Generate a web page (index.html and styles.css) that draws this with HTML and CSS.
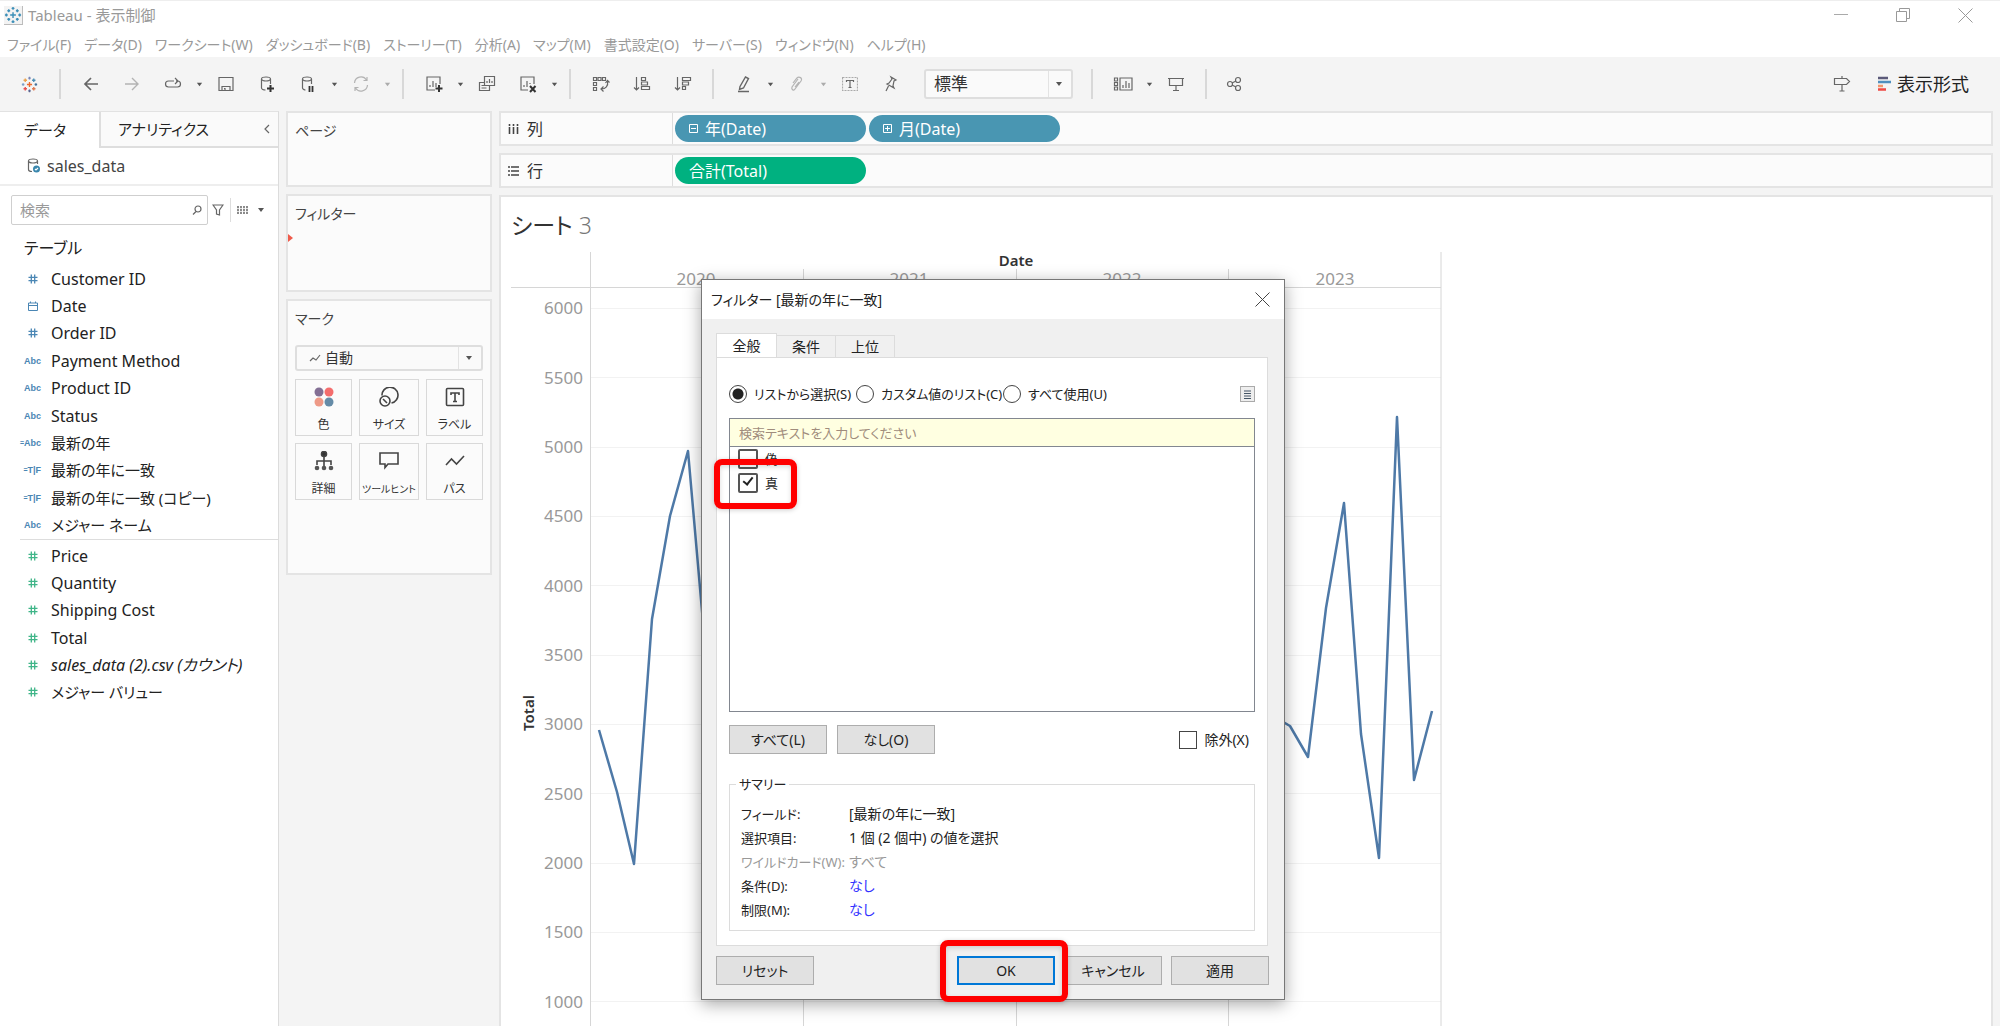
FILE: index.html
```html
<!DOCTYPE html>
<html lang="ja">
<head>
<meta charset="utf-8">
<title>Tableau - 表示制御</title>
<link rel="stylesheet" href="styles.css">
</head>
<body>
<svg class="defs" width="0" height="0" aria-hidden="true">
  <symbol id="caret" viewBox="0 0 8 8"><path d="M1 2h6L4 6z" fill="currentColor"/></symbol>
  <symbol id="hash" viewBox="0 0 10 10"><path d="M3.300 .5v9M6.700 .5v9M.5 3.300h9M.5 6.700h9" fill="none" stroke="currentColor" stroke-width="1.300"/></symbol>
  <symbol id="spark" viewBox="0 0 20 20"><g stroke-width="1.600" fill="none">
    <path d="M10 7v6M7 10h6" stroke="#eb6a2d"/>
    <path d="M10 1v3M8.500 2.500h3" stroke="#7b86b5"/><path d="M10 16v3M8.500 17.500h3" stroke="#5a6591"/>
    <path d="M2.500 8.500v3M1 10h3" stroke="#7b9fc9"/><path d="M17.500 8.500v3M16 10h3" stroke="#46719b"/>
    <path d="M5 3v4M3 5h4" stroke="#eba14b"/><path d="M15 3v4M13 5h4" stroke="#4e8fb5"/>
    <path d="M5 13v4M3 15h4" stroke="#e8504f"/><path d="M15 13v4M13 15h4" stroke="#e07a52"/></g></symbol>
</svg>
<div class="app">
  <header class="titlebar">
    <svg class="appicon" width="19" height="19" viewBox="0 0 20 20"><rect width="20" height="20" fill="#f3f3f3"/><path d="M20 0v20H0" fill="none" stroke="#bbb" stroke-width="2"/><g stroke="#3c8fb8" stroke-width="1.500"><path d="M9.500 6.500v6M6.500 9.500h6M9.500 1v3M8 2.500h3M9.500 15v3M8 16.500h3M2.500 8v3M1 9.500h3M16.500 8v3M15 9.500h3M5 3.500v3M3.500 5h3M14 3.500v3M12.500 5h3M5 12.500v3M3.500 14h3M14 12.500v3M12.500 14h3"/></g></svg>
    <h1 class="apptitle">Tableau - 表示制御</h1>
    <div class="winbtns">
      <button aria-label="最小化"><svg width="14" height="14"><path d="M0 6.500h14" stroke="#aaa"/></svg></button>
      <button aria-label="元に戻す"><svg width="15" height="15" fill="none" stroke="#999"><path d="M.5 3.500h10v10H.5zM3.500 3.500v-3h10v10h-3"/></svg></button>
      <button aria-label="閉じる"><svg width="15" height="15"><path d="M.5 .5l14 14M14.500 .5l-14 14" stroke="#999"/></svg></button>
    </div>
  </header>
  <nav class="menu">
    <a href="#">ファイル(F)</a><a href="#">データ(D)</a><a href="#">ワークシート(W)</a><a href="#">ダッシュボード(B)</a><a href="#">ストーリー(T)</a><a href="#">分析(A)</a><a href="#">マップ(M)</a><a href="#">書式設定(O)</a><a href="#">サーバー(S)</a><a href="#">ウィンドウ(N)</a><a href="#">ヘルプ(H)</a>
  </nav>
  <div class="toolbar">
    <button class="tb" aria-label="スタートページ"><svg width="17" height="17"><use href="#spark"/></svg></button>
    <i class="sep"></i>
    <button class="tb" aria-label="元に戻す"><svg width="16" height="16" class="ic"><path d="M15 8H2M8 2L2 8l6 6" stroke-width="1.700"/></svg></button>
    <button class="tb off" aria-label="やり直す"><svg width="16" height="16" class="ic"><path d="M1 8h13M8 2l6 6-6 6" stroke-width="1.400"/></svg></button>
    <button class="tb" aria-label="再生"><svg width="18" height="14" class="ic"><path d="M10 4H4.500a3 3 0 0 0 0 6h9a3 3 0 0 0 0-6H12M11 1l3 3-3 3"/></svg></button>
    <button class="cr" aria-label="再生メニュー"><svg width="7" height="7"><use href="#caret"/></svg></button>
    <button class="tb" aria-label="保存"><svg width="16" height="16" class="ic"><path d="M1 1.500h14v13H1zM4 14.500v-4h8v4M6 12.500h1v2"/></svg></button>
    <button class="tb" aria-label="データソース"><svg width="18" height="18" class="ic"><ellipse cx="8" cy="4" rx="4.500" ry="2"/><path d="M3.500 4v9c0 1 2 2 4 2M12.500 4v5"/><path d="M12.500 10v7M9 13.500h7" stroke="#333" stroke-width="2"/></svg></button>
    <button class="tb" aria-label="自動更新の一時停止"><svg width="18" height="18" class="ic"><ellipse cx="8" cy="4" rx="4.500" ry="2"/><path d="M3.500 4v9c0 1 2 2 3 2M12.500 4v5"/><path d="M10.500 11v6M13.500 11v6" stroke="#333" stroke-width="1.800"/></svg></button>
    <button class="cr" aria-label="自動更新メニュー"><svg width="7" height="7"><use href="#caret"/></svg></button>
    <button class="tb off" aria-label="更新"><svg width="18" height="18" class="ic"><path d="M2.500 8a6.500 6.500 0 0 1 12-3M15.500 10a6.500 6.500 0 0 1-12 3M15 2v3.500h-3.500M3 16v-3.500h3.500"/></svg></button>
    <button class="cr off" aria-label="更新メニュー"><svg width="7" height="7"><use href="#caret"/></svg></button>
    <i class="sep"></i>
    <button class="tb" aria-label="新しいワークシート"><svg width="18" height="18" class="ic"><path d="M10 15H2V2h13v7M5 12v-2M8 12V6M11 12V8"/><path d="M14 10v7M10.500 13.500h7" stroke="#333" stroke-width="2"/></svg></button>
    <button class="cr" aria-label="新規メニュー"><svg width="7" height="7"><use href="#caret"/></svg></button>
    <button class="tb" aria-label="複製"><svg width="18" height="18" class="ic"><path d="M6.500 1.500h10v9h-10zM6.500 7.500h-5v8h10v-5M9 8V6M11.500 8V4M14 8V6M3.500 10.500h3M3.500 13h5"/></svg></button>
    <button class="tb" aria-label="クリア"><svg width="18" height="18" class="ic"><path d="M9 15H2V2h13v7M5 12v-2M8 12V6M11 9V8"/><path d="M11 11l5.500 6M16.500 11L11 17" stroke="#333" stroke-width="2"/></svg></button>
    <button class="cr" aria-label="クリアメニュー"><svg width="7" height="7"><use href="#caret"/></svg></button>
    <i class="sep"></i>
    <button class="tb" aria-label="入れ替え"><svg width="18" height="18" class="ic"><path d="M1.500 2.500h3v3h-3zM6 2.500h3v3H6zM10.500 2.500h3v3h-3zM1.500 7.500h3v3h-3zM1.500 12.500h3v3h-3zM15.500 6c1 5-2 8-6 8M13.500 8l2-2.500 2 2M11.500 11.500L9 14l2.500 2.500"/></svg></button>
    <button class="tb" aria-label="昇順"><svg width="18" height="18" class="ic"><path d="M3.500 2v13M1 12.500L3.500 15 6 12.500M8.500 2.500h4v3h-4zM8.500 7h6v3h-6zM8.500 11.500h8v3h-8z"/></svg></button>
    <button class="tb" aria-label="降順"><svg width="18" height="18" class="ic"><path d="M3.500 2v13M1 12.500L3.500 15 6 12.500M8.500 2.500h8v3h-8zM8.500 7h6v3h-6zM8.500 11.500h3v3h-3z"/></svg></button>
    <i class="sep"></i>
    <button class="tb" aria-label="ハイライト"><svg width="16" height="18" class="ic"><path d="M4 11.500L9.500 2l3 1.500-5 9.500-4 1.500zM2 16.500h11" stroke-width="1.400"/></svg></button>
    <button class="cr" aria-label="ハイライトメニュー"><svg width="7" height="7"><use href="#caret"/></svg></button>
    <button class="tb off" aria-label="グループ"><svg width="16" height="18" class="ic"><path d="M4 8l4-5c2-2 6 0 4 3l-6 8c-1 2-4 1-3-2l6-8M6 12l4-5"/></svg></button>
    <button class="cr off" aria-label="グループメニュー"><svg width="7" height="7"><use href="#caret"/></svg></button>
    <button class="tb" aria-label="マークラベル"><svg width="16" height="16" class="ic"><path d="M.5 1.500h15v13H.5z" stroke="#aaa" stroke-dasharray="2 1"/><path d="M4.500 6V4.500h7V6M8 4.500v7M6.500 11.500h3"/></svg></button>
    <button class="tb" aria-label="固定"><svg width="16" height="18" class="ic"><path d="M8 2l5 3-2 1-1 5 1 2-7-4 2-1 3-4zM5.500 11L3 16"/></svg></button>
    <label class="combo fit"><select aria-label="表示サイズ"><option>標準</option></select><svg width="8" height="8"><use href="#caret"/></svg></label>
    <i class="sep"></i>
    <button class="tb" aria-label="カードの表示"><svg width="20" height="16" class="ic"><path d="M1.500 2h3v3h-3zM1.500 6.500h3v3h-3zM1.500 11h3v3h-3zM7 2h12v12H7zM10 12V9M13 12V5M16 12V7" /></svg></button>
    <button class="cr" aria-label="カードメニュー"><svg width="7" height="7"><use href="#caret"/></svg></button>
    <button class="tb" aria-label="プレゼンテーション"><svg width="16" height="16" class="ic"><path d="M0 2.500h16M1.500 2.500v7h13v-7M8 9.500v5M5 14.500h6"/></svg></button>
    <i class="sep"></i>
    <button class="tb share" aria-label="共有"><svg width="16" height="16" class="ic"><circle cx="4" cy="8" r="2.500"/><circle cx="12" cy="4" r="2.500"/><circle cx="12" cy="12" r="2.500"/><path d="M6 7l4-2M6 9l4 2"/></svg></button>
    <div class="tbright">
      <button class="guide" aria-label="データガイド"><svg width="18" height="18" class="ic"><path d="M1.500 3.500h12l3 3-3 3h-12zM9 1v2.500M9 9.500V16M6.500 16h5"/></svg></button>
      <button class="showme"><svg width="13" height="16"><path d="M0 2h10" stroke="#5b5a79" stroke-width="2.500"/><path d="M0 6h13" stroke="#4f8fbe" stroke-width="2.500"/><path d="M0 10h5" stroke="#f2966b" stroke-width="2.500"/><path d="M0 13.500h8" stroke="#ef4a45" stroke-width="2.500"/></svg>表示形式</button>
    </div>
  </div>

  <main class="work">
    <aside class="data">
      <div class="dtabs"><button class="dtab on">データ</button><button class="dtab rest">アナリティクス<svg width="6" height="10" class="ic"><path d="M5 1L1 5l4 4"/></svg></button></div>
      <div class="source"><svg width="14" height="16" class="ic"><ellipse cx="6" cy="3" rx="4.500" ry="2"/><path d="M1.500 3v8.500c0 1 1.500 2 3.500 2M10.500 3v3"/><circle cx="9.500" cy="11" r="3.500" fill="#3a87ad" stroke="none"/><path d="M8 11l1 1 2-2" stroke="#fff"/></svg>sales_data</div>
      <div class="search">
        <label class="sbox"><input type="text" placeholder="検索" aria-label="検索"><svg width="10" height="10" class="ic"><circle cx="6" cy="4" r="3"/><path d="M4 6.500L1 9.500"/></svg></label>
        <button aria-label="フィルター"><svg width="12" height="12" class="ic"><path d="M1 1h10L7.500 6v5l-3-1V6z"/></svg></button>
        <i></i>
        <button class="view" aria-label="表示"><svg width="12" height="10"><path d="M1 1v8M4 1v8M7 1v8M10 1v8" stroke="#777" stroke-width="1.700" stroke-dasharray="2.200 .7"/></svg><svg width="8" height="8"><use href="#caret"/></svg></button>
      </div>
      <h2>テーブル</h2>
      <ul class="fields dims">
        <li><svg width="10" height="10"><use href="#hash"/></svg>Customer ID</li>
        <li><svg width="10" height="10" fill="none" stroke="currentColor"><path d="M.5 2h9v7.500h-9zM.5 4.500h9M2.500 .5V2M7.500 .5V2"/></svg>Date</li>
        <li><svg width="10" height="10"><use href="#hash"/></svg>Order ID</li>
        <li><b>Abc</b>Payment Method</li>
        <li><b>Abc</b>Product ID</li>
        <li><b>Abc</b>Status</li>
        <li class="jp"><b class="calc">Abc</b>最新の年</li>
        <li class="jp"><b class="calc">T|F</b>最新の年に一致</li>
        <li class="jp"><b class="calc">T|F</b>最新の年に一致 (コピー)</li>
        <li class="jp"><b>Abc</b>メジャー ネーム</li>
      </ul>
      <ul class="fields meas">
        <li><svg width="10" height="10"><use href="#hash"/></svg>Price</li>
        <li><svg width="10" height="10"><use href="#hash"/></svg>Quantity</li>
        <li><svg width="10" height="10"><use href="#hash"/></svg>Shipping Cost</li>
        <li><svg width="10" height="10"><use href="#hash"/></svg>Total</li>
        <li class="it"><svg width="10" height="10"><use href="#hash"/></svg>sales_data (2).csv (カウント)</li>
        <li class="jp"><svg width="10" height="10"><use href="#hash"/></svg>メジャー バリュー</li>
      </ul>
    </aside>

    <section class="cards">
      <div class="card pages"><h3>ページ</h3></div>
      <div class="card filters"><h3>フィルター</h3><svg class="flag" width="5" height="8"><path d="M0 0l5 4-5 4z" fill="#ef5b4b"/></svg></div>
      <div class="card marks">
        <h3>マーク</h3>
        <div class="combo mark"><svg class="lead ic" width="12" height="8"><path d="M1 7l3-3 3 2 4-5"/></svg><select aria-label="マークの種類"><option>自動</option></select><svg width="8" height="8"><use href="#caret"/></svg></div>
        <div class="cells">
          <button><svg width="20" height="20"><circle cx="5" cy="5" r="4.500" fill="#836f94"/><circle cx="15" cy="5" r="4.500" fill="#f46d6d"/><circle cx="5" cy="15" r="4.500" fill="#ee9a87"/><circle cx="15" cy="15" r="4.500" fill="#658ba7"/></svg>色</button>
          <button><svg width="20" height="20" class="ic dk"><path d="M3 8.500a8 8 0 1 1 9.500 7.500"/><circle cx="6" cy="14" r="5"/><path d="M4 12l4 4"/></svg>サイズ</button>
          <button><svg width="20" height="20" class="ic dk"><rect x="1.500" y="1.500" width="17" height="17" rx="1"/><path d="M6 8V6h8v2M10 6v9M8 14.500h4"/></svg>ラベル</button>
          <button><svg width="20" height="20" class="ic dk"><circle cx="10" cy="3" r="2.500" fill="#333"/><path d="M10 5v11M3 14v-4h14v4"/><g fill="#555" stroke="none"><circle cx="3" cy="17" r="2.300"/><circle cx="10" cy="17" r="2.300"/><circle cx="17" cy="17" r="2.300"/></g></svg>詳細</button>
          <button><svg width="20" height="20" class="ic dk"><path d="M1 2h18v11H9l-3 3.500V13H1z"/></svg><small>ツールヒント</small></button>
          <button><svg width="20" height="20" class="ic dk"><path d="M1 14l5.500-6 5 5L19 5"/></svg>パス</button>
        </div>
      </div>
    </section>

    <section class="sheet">
      <div class="shelf"><div class="sname"><svg width="11" height="12"><path d="M1.500 1v2M5.500 1v2M9.500 1v2M1.500 4v7M5.500 4v7M9.500 4v7" stroke="#444" stroke-width="1.600"/></svg>列</div>
        <div class="pills"><button class="pill"><svg width="9" height="9" fill="none" stroke="#fff"><path d="M.5 .5h8v8h-8zM2 4.500h5"/></svg>年(Date)</button><button class="pill"><svg width="9" height="9" fill="none" stroke="#fff"><path d="M.5 .5h8v8h-8zM2 4.500h5M4.500 2v5"/></svg>月(Date)</button></div></div>
      <div class="shelf"><div class="sname"><svg width="11" height="12"><path d="M0 2h2M0 6h2M0 10h2M3 2h8M3 6h8M3 10h8" stroke="#444" stroke-width="1.600"/></svg>行</div>
        <div class="pills"><button class="pill green">合計(Total)</button></div></div>
      <div class="view-area">
        <h2>シート <span>3</span></h2>
        <svg class="chart" width="931" height="776" viewBox="511 250 931 776">
          <g class="grid"><path d="M590 308.500h851M590 377.500h851M590 447.500h851M590 516.500h851M590 585.500h851M590 655.500h851M590 724.500h851M590 793.500h851M590 863.500h851M590 932.500h851M590 1001.500h851"/></g>
          <g class="axis"><path d="M511 287.500h930M590.500 252v774M803.500 269v757M1016.500 269v757M1228.500 269v757M1441 252v774"/></g>
          <g class="lab" text-anchor="middle"><text x="696" y="285">2020</text><text x="909" y="285">2021</text><text x="1122" y="285">2022</text><text x="1335" y="285">2023</text></g>
          <g class="lab" text-anchor="end"><text x="583" y="314">6000</text><text x="583" y="384">5500</text><text x="583" y="453">5000</text><text x="583" y="522">4500</text><text x="583" y="592">4000</text><text x="583" y="661">3500</text><text x="583" y="730">3000</text><text x="583" y="800">2500</text><text x="583" y="869">2000</text><text x="583" y="938">1500</text><text x="583" y="1008">1000</text></g>
          <text class="ttl" x="1016" y="266" text-anchor="middle">Date</text>
          <text class="ttl" text-anchor="middle" transform="translate(534 713) rotate(-90)">Total</text>
          <path class="line" d="M599 730L617 792 634 864 652 619 670 516 688 451 705 645"/>
          <path class="line" d="M1273 716L1290 726 1308 757 1326 608 1344 503 1361 734 1379 858 1397 417 1414 780 1432 711"/>
        </svg>
      </div>
    </section>
  </main>
</div>

<div class="dialog" role="dialog" aria-labelledby="dt">
  <div class="dhead"><h2 id="dt">フィルター [最新の年に一致]</h2><button aria-label="閉じる"><svg width="15" height="15"><path d="M.5 .5l14 14M14.500 .5l-14 14" stroke="#444"/></svg></button></div>
  <div class="dbody">
    <div class="tabs"><button class="on">全般</button><button>条件</button><button>上位</button></div>
    <div class="panel">
      <div class="radios">
        <input type="radio" name="mode" id="m1" checked><label for="m1">リストから選択(S)</label>
        <input type="radio" name="mode" id="m2"><label for="m2">カスタム値のリスト(C)</label>
        <input type="radio" name="mode" id="m3"><label for="m3">すべて使用(U)</label>
        <button class="opts" aria-label="オプション"><svg width="7" height="9"><path d="M0 1h7M0 3.500h7M0 6h7M0 8.500h7" stroke="#456" /></svg></button>
      </div>
      <div class="listbox">
        <input class="find" type="text" placeholder="検索テキストを入力してください" aria-label="検索テキスト">
        <div class="opt"><input type="checkbox" id="c1"><label for="c1">偽</label></div>
        <div class="opt"><input type="checkbox" id="c2" checked><label for="c2">真</label></div>
      </div>
      <div class="listbtns"><button class="btn">すべて(L)</button><button class="btn">なし(O)</button>
        <div class="excl"><input type="checkbox" id="ex"><label for="ex">除外(X)</label></div></div>
      <fieldset>
        <legend>サマリー</legend>
        <dl>
          <dt>フィールド:</dt><dd>[最新の年に一致]</dd>
          <dt>選択項目:</dt><dd>1 個 (2 個中) の値を選択</dd>
          <dt class="dim">ワイルドカード(W):</dt><dd class="dim">すべて</dd>
          <dt>条件(D):</dt><dd><a href="#">なし</a></dd>
          <dt>制限(M):</dt><dd><a href="#">なし</a></dd>
        </dl>
      </fieldset>
    </div>
    <div class="foot"><button class="btn">リセット</button><button class="btn ok">OK</button><button class="btn">キャンセル</button><button class="btn">適用</button></div>
  </div>
  <span class="hl hl-check"></span>
  <span class="hl hl-ok"></span>
</div>
</body>
</html>
```
FILE: styles.css
```css
* { box-sizing: border-box; }
body {
  margin: 0;
  font: 16px/24px "Noto Sans", "Noto Sans CJK JP", sans-serif;
  font-feature-settings: "palt";
  color: #333;
  background: #f4f4f4;
}
h1, h2, h3, ul, dl, dd, fieldset { margin: 0; padding: 0; font-weight: 400; }
button, input, select { font: inherit; font-feature-settings: inherit; color: inherit; margin: 0; padding: 0; border: 0; background: none; }
a { color: inherit; text-decoration: none; }
svg { display: block; flex: none; }
.defs { position: absolute; }
.ic { fill: none; stroke: #666; stroke-width: 1.2; }
.dk { stroke: #444; stroke-width: 1.6; }

.app { height: 100vh; display: flex; flex-direction: column; overflow: hidden; }
.titlebar { height: 32px; display: flex; align-items: center; gap: 5px; padding: 0 4px 3px; background: #fff; border-top: 1px solid #eee; }
.apptitle { font-size: 15px; color: #999; }
.winbtns { margin-left: auto; display: flex; }
.winbtns button { width: 62px; height: 28px; display: grid; place-items: center; }
.menu { height: 25px; display: flex; gap: 13px; align-items: center; padding-left: 7px; font-size: 14px; color: #999; white-space: nowrap; background: #fff; }

.toolbar { height: 54px; display: flex; align-items: center; padding: 0 31px 0 9px; background: #f4f4f4; }
.tb { width: 41px; height: 32px; display: grid; place-items: center; }
.cr { width: 12px; height: 32px; display: grid; place-items: center; color: #555; }
.off { opacity: .45; }
.sep { width: 20px; height: 30px; background: linear-gradient(#d8d8d8, #d8d8d8) center / 2px 100% no-repeat; }
.share { width: 36px; }
.combo { display: grid; align-items: center; border: 2px solid #dedede; border-radius: 3px; background: #fafafa; color: #555; }
.combo > * { grid-area: 1 / 1; }
.combo select { appearance: none; width: 100%; height: 100%; color: #333; background: linear-gradient(#e3e3e3, #e3e3e3) right 22px top / 1px 100% no-repeat; }
.combo svg { justify-self: end; margin-right: 8px; pointer-events: none; }
.combo .lead { justify-self: start; margin-left: 12px; }
.fit { width: 149px; height: 30px; margin: 0 9px 0 13px; }
.fit select { padding-left: 8px; font-size: 17px; }
.tbright { margin-left: auto; display: flex; align-items: center; gap: 27px; }
.showme { display: flex; align-items: center; gap: 6px; font-size: 18px; color: #222; }

.work { flex: 1; min-height: 0; display: grid; grid-template-columns: 279px 206px 1fr; gap: 7px; padding-right: 7px; }
.data { background: #fff; border-right: 1px solid #dcdcdc; border-top: 1px solid #e2e2e2; color: #222; }
.dtabs { display: flex; height: 36px; font-size: 15px; }
.dtab { display: flex; align-items: center; padding: 0 8px 0 24px; }
.dtab.on { width: 99px; }
.rest { flex: 1; justify-content: space-between; padding-left: 17px; border: solid #dedede; border-width: 0 0 2px 2px; background: #fafafa; }
.source { height: 38px; display: flex; align-items: center; gap: 6px; padding-left: 27px; color: #444; border-bottom: 2px solid #eee; }
.search { display: flex; align-items: center; gap: 4px; padding: 9px 0 0 11px; }
.sbox { width: 197px; height: 30px; display: flex; align-items: center; padding: 0 5px 0 8px; border: 1px solid #cfcfcf; border-radius: 2px; }
.sbox input { flex: 1; min-width: 0; outline: 0; }
.sbox input::placeholder { color: #999; opacity: 1; font-size: 15px; }
.search button { display: flex; align-items: center; gap: 8px; color: #555; }
.search i { width: 1px; height: 24px; margin-left: 2px; background: #ddd; }
.search .view { padding-left: 2px; }
.data h2 { font-size: 16px; margin: 11px 0 5px; padding-left: 24px; }
.fields { list-style: none; display: grid; grid-auto-rows: 1fr; }
.fields li { display: flex; align-items: center; white-space: nowrap; padding-left: 51px; }
.fields li > svg { margin: 0 13px 0 -23px; }
.fields b { width: 28px; margin-left: -28px; padding-right: 10px; font: 700 9px/12px "Liberation Sans", sans-serif; text-align: right; display: flex; justify-content: flex-end; }
.fields .calc::before { content: "="; font-size: 7px; }
.fields svg, .fields b { color: #4a86b4; }
.fields .jp { font-size: 15px; }
.fields.meas svg { color: #3fb588; }
.dims { height: 274px; }
.meas { height: 167px; margin-left: 20px; padding-top: 2px; border-top: 1px solid #ddd; }
.fields.meas li { padding-left: 31px; }
.it { font-style: italic; }

.cards { display: flex; flex-direction: column; gap: 7px; }
.card { position: relative; border: 2px solid #e4e4e4; background: #fbfbfb; padding: 6px 7px; }
.card h3 { font-size: 14px; line-height: 24px; color: #444; }
.pages { height: 76px; }
.filters { height: 98px; }
.marks { height: 276px; }
.flag { position: absolute; left: 0; top: 38px; }
.mark { height: 26px; margin: 14px 0 8px; }
.mark select { padding-left: 28px; font-size: 14px; line-height: 22px; }
.cells { display: grid; grid-template-columns: 57px 60px 57px; justify-content: space-between; gap: 7px; }
.cells button { height: 57px; display: flex; flex-direction: column; align-items: center; justify-content: space-between; padding-top: 7px; border: 1px solid #d9d9d9; font-size: 12px; line-height: 20px; white-space: nowrap; }
.cells small { font-size: 10px; }

.sheet { min-width: 0; display: flex; flex-direction: column; gap: 7px; }
.shelf { height: 35px; display: flex; border: 2px solid #e4e4e4; background: #fbfbfb; }
.sname { width: 172px; display: flex; align-items: center; gap: 8px; padding-left: 7px; border-right: 1px solid #ddd; }
.pills { display: flex; align-items: center; gap: 3px; padding-left: 2px; }
.pill { width: 191px; height: 27px; display: flex; align-items: center; gap: 7px; padding-left: 14px; border-radius: 14px; color: #fff; background: #4996b2; }
.pill.green { background: #00b180; }
.view-area { flex: 1; min-height: 0; overflow: hidden; background: #fff; border: 2px solid #e4e4e4; border-bottom: 0; padding: 12px 0 0 10px; }
.view-area h2 { font-size: 23px; line-height: 32px; margin-bottom: 9px; }
.view-area h2 span { color: #777; font-weight: 300; }
.chart { font-size: 17px; }
.grid { stroke: #f2f2f2; }
.axis { stroke: #d6d6d6; fill: none; }
.lab { fill: #999; }
.ttl { fill: #333; font-size: 15px; font-weight: 600; }
.line { fill: none; stroke: #4e79a7; stroke-width: 2.5; stroke-linejoin: round; }

.dialog { position: absolute; left: 701px; top: 279px; width: 584px; border: 1px solid #777; background: #f0f0f0; box-shadow: 0 4px 16px rgba(0, 0, 0, .35); font-size: 14px; line-height: 24px; color: #222; }
.dhead { height: 39px; display: flex; align-items: center; justify-content: space-between; padding: 0 14px 0 9px; background: #fff; }
.dhead h2 { font-size: 14px; }
.dbody { padding: 14px; }
.tabs { display: flex; align-items: flex-end; }
.tabs button { width: 59px; height: 22px; border: 1px solid #dcdcdc; border-width: 1px 1px 0 0; line-height: 20px; }
.tabs .on { width: 61px; height: 24px; border-left-width: 1px; background: #fff; }
.panel { background: #fff; border: 1px solid #dcdcdc; margin-right: 2px; padding: 24px 12px 14px 12px; }
.radios { display: flex; align-items: center; white-space: nowrap; font-size: 13px; }
.radios input, .opt input, .excl input { appearance: none; flex: none; width: 18px; height: 18px; border: 1px solid #444; background: #fff; }
.radios input { border-radius: 50%; }
.radios input:checked { background: radial-gradient(circle, #222 5px, #fff 6px); }
.radios label { width: 109px; padding-left: 7px; }
.radios label[for="m2"] { width: 129px; }
.opts { width: 15px; height: 16px; margin-left: auto; display: grid; place-items: center; border: 1px solid #aaa; background: #eee; }
.listbox { height: 294px; margin-top: 12px; border: 1px solid #828790; }
.find { display: block; width: 100%; height: 28px; padding: 0 9px; font-size: 13px; background: #ffffe1; border-bottom: 1px solid #828790; }
.find::placeholder { color: #a08c7c; opacity: 1; }
.opt { height: 24px; display: flex; align-items: center; gap: 7px; padding-left: 8px; }
.opt input { width: 20px; height: 20px; border-width: 2px; border-color: #555; border-radius: 2px; }
.opt label { font-size: 13px; }
.opt input:checked { display: grid; }
.opt input:checked::before { content: ""; width: 4px; height: 8px; margin-left: 5px; border: solid #222; border-width: 0 2px 2px 0; transform: rotate(38deg); }
.listbtns { display: flex; align-items: center; gap: 10px; margin-top: 13px; }
.btn { width: 98px; height: 29px; border: 1px solid #adadad; background: #e1e1e1; line-height: 24px; }
.excl { margin-left: auto; display: flex; align-items: center; gap: 7px; padding-right: 6px; }
fieldset { margin-top: 18px; border: 1px solid #dcdcdc; padding: 6px 12px 8px 11px; }
legend { margin-left: -5px; padding: 0 3px; font-size: 13px; }
dl { display: grid; grid-template-columns: 108px 1fr; }
dt { font-size: 13px; white-space: nowrap; }
.dim { color: #999; }
dd a { color: #33f; }
.foot { display: flex; gap: 9px; margin-top: 10px; padding-right: 1px; }
.foot .ok { margin-left: auto; border: 2px solid #0078d7; }
.hl { position: absolute; border: 6px solid #f00; border-radius: 8px; box-shadow: 0 1px 5px rgba(0, 0, 0, .2), inset 0 2px 5px rgba(0, 0, 0, .15); pointer-events: none; }
.hl-check { left: 12px; top: 179px; width: 83px; height: 50px; }
.hl-ok { left: 238px; top: 660px; width: 128px; height: 62px; }
```
